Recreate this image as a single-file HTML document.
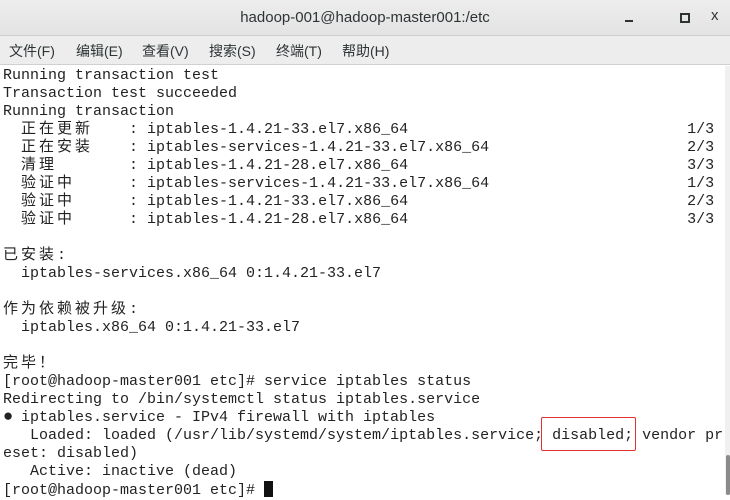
<!DOCTYPE html>
<html><head><meta charset="utf-8"><style>
body{margin:0;width:730px;height:495px;overflow:hidden;background:#fff;position:relative;font-family:"Liberation Sans","Noto Sans CJK SC",sans-serif}
#title{position:absolute;left:0;top:0;width:730px;height:36px;background:linear-gradient(#ededed,#e3e3e3);border-bottom:1px solid #cfcfcf;box-sizing:border-box}
#title .t{position:absolute;left:0;right:0;top:9px;text-align:center;font-size:15px;color:#2e3436}
#menu{position:absolute;left:0;top:36px;width:730px;height:29px;background:#ededed;border-bottom:1px solid #d0d0d0;box-sizing:border-box;font-size:14px;color:#2e3436}
#menu span{position:absolute;top:5px}
#term{position:absolute;left:3px;top:67px;margin:0;font-family:"Liberation Mono","Noto Sans CJK SC",monospace;font-size:15px;line-height:18px;color:#222;white-space:pre}
.c{letter-spacing:3px}
#box{position:absolute;left:541px;top:417px;width:93px;height:32px;border:1px solid #e03030;border-radius:2px}
#sb{position:absolute;left:725px;top:66px;width:5px;height:429px;background:#f0f0f0}
#sbt{position:absolute;left:726px;top:455px;width:4px;height:40px;background:#8a8a8a;border-radius:2px}
#cur{display:inline-block;width:9px;height:16px;background:#111;vertical-align:-3px}
</style></head><body>
<div id="title"><div class="t">hadoop-001@hadoop-master001:/etc</div>
<div style="position:absolute;left:625px;top:20px;width:8px;height:2px;background:#2e3436"></div>
<div style="position:absolute;left:680px;top:13px;width:6px;height:6px;border:2px solid #2e3436"></div>
<div style="position:absolute;left:711px;top:7px;font-size:15px;color:#2e3436">x</div>
</div>
<div id="menu"><span style="left:9px">文件(F)</span><span style="left:76px">编辑(E)</span><span style="left:142px">查看(V)</span><span style="left:209px">搜索(S)</span><span style="left:276px">终端(T)</span><span style="left:342px">帮助(H)</span></div>
<pre id="term">Running transaction test
Transaction test succeeded
Running transaction
  <span class="c">正在更新</span>    : iptables-1.4.21-33.el7.x86_64                               1/3
  <span class="c">正在安装</span>    : iptables-services-1.4.21-33.el7.x86_64                      2/3
  <span class="c">清理</span>        : iptables-1.4.21-28.el7.x86_64                               3/3
  <span class="c">验证中</span>      : iptables-services-1.4.21-33.el7.x86_64                      1/3
  <span class="c">验证中</span>      : iptables-1.4.21-33.el7.x86_64                               2/3
  <span class="c">验证中</span>      : iptables-1.4.21-28.el7.x86_64                               3/3

<span class="c">已安装</span>:
  iptables-services.x86_64 0:1.4.21-33.el7

<span class="c">作为依赖被升级</span>:
  iptables.x86_64 0:1.4.21-33.el7

<span class="c">完毕！</span>
[root@hadoop-master001 etc]# service iptables status
Redirecting to /bin/systemctl status iptables.service
<span style="display:inline-block;width:18px;font-size:17px">●</span>iptables.service - IPv4 firewall with iptables
   Loaded: loaded (/usr/lib/systemd/system/iptables.service; disabled; vendor pr
eset: disabled)
   Active: inactive (dead)
[root@hadoop-master001 etc]# <span id="cur"></span></pre>
<div id="box"></div>
<div id="sb"></div><div id="sbt"></div>
</body></html>
